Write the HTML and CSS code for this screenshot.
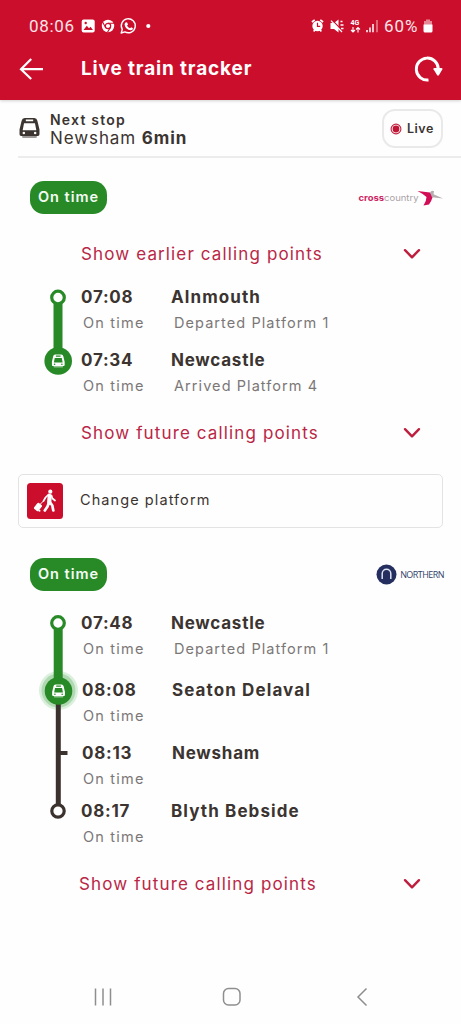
FILE: index.html
```html
<!DOCTYPE html>
<html lang="en">
<head>
<meta charset="utf-8">
<title>Live train tracker</title>
<link rel="stylesheet" href="styles.css">
</head>
<body>
<svg class="defs" width="0" height="0">
  <symbol id="train" viewBox="0 0 20 20">
    <path fill-rule="evenodd" d="M5.500 0.500H14.500Q17 0.500 17.500 3L19.500 11.500V16Q19.500 17.500 18 17.500H2Q0.500 17.500 0.500 16V11.500L2.500 3Q3 0.500 5.500 0.500ZM6.500 2V3.600H13.500V2ZM4.800 5.400L3.500 12.200H16.500L15.200 5.400ZM4.600 13.600A1.200 1.200 0 1 0 4.600 16A1.200 1.200 0 1 0 4.600 13.600ZM15.400 13.600A1.200 1.200 0 1 0 15.400 16A1.200 1.200 0 1 0 15.400 13.600Z"/>
    <path d="M3 17.500H17V18.500Q17 19.500 16 19.500H4Q3 19.500 3 18.500Z" opacity=".5"/>
  </symbol>
  <symbol id="chevron" viewBox="0 0 18 12">
    <path d="M2 2.200L9 9.300L16 2.200" fill="none" stroke="#bf1d3d" stroke-width="2.400" stroke-linecap="round" stroke-linejoin="round"/>
  </symbol>
</svg>

<header class="top">
  <div class="status">
    <span class="clock">08:06</span>
    <svg class="st-apps" width="72" height="18" viewBox="0 0 72 18" fill="none">
      <rect x="0.700" y="2.500" width="13" height="13" rx="2" fill="#fff"/>
      <path d="M2.500 13L5.800 8.800L8 11.200L9.500 9.700L12 13Z" fill="#cc0e2d"/>
      <circle cx="4.700" cy="6" r="1.200" fill="#cc0e2d"/>
      <circle cx="27" cy="9" r="6.200" fill="#fff"/>
      <circle cx="27" cy="9" r="2.700" fill="#fff" stroke="#cc0e2d" stroke-width="1.200"/>
      <path d="M27 6.200H33M24.600 10.400L21.700 5.300M29.400 10.400L26.500 15.300" stroke="#cc0e2d" stroke-width="1.100"/>
      <path d="M40.200 16L41.300 12.400A7 7 0 1 1 43.900 14.900Z" stroke="#fff" stroke-width="1.400" stroke-linejoin="round"/>
      <path d="M44.500 5.500L46 5.200L47 7.500L46 8.700Q47 10.600 49 11.300L50.200 10.200L52 11.200Q52 13 49.800 13.200Q44.500 12.500 43.600 7.700Q43.600 6.200 44.500 5.500Z" fill="#fff"/>
      <circle cx="67.300" cy="9" r="2.100" fill="#fff"/>
    </svg>
    <svg class="st-sys" width="68" height="18" viewBox="0 0 68 18" fill="none">
      <circle cx="6.500" cy="9" r="5.200" fill="#fff"/>
      <path d="M0.900 5L3.700 2.800M12.100 5L9.300 2.800M2.700 14.500L4 12.800M10.300 14.500L9 12.800" stroke="#fff" stroke-width="1.700"/>
      <path d="M6.500 5.800V9.400H9.200" stroke="#cc0e2d" stroke-width="1.200"/>
      <path d="M19.500 6H23L27.500 2.500V15.500L23 12H19.500Z" fill="#fff"/>
      <path d="M21 3L32.500 15" stroke="#cc0e2d" stroke-width="1.200"/>
      <path d="M20 3.700L31 15" stroke="#fff" stroke-width="1.200"/>
      <path d="M29.500 4.500H31.500M29.500 8H32.500M30 11.500H32.500" stroke="#fff" stroke-width="1.300"/>
      <text x="39.500" y="8.200" class="net">4G</text>
      <path d="M42 10V15M40 13L42 15L44 13M47 15.500V10.500M45 12.500L47 10.500L49 12.500" stroke="#fff" stroke-width="1.100"/>
      <path d="M56 13V15.300M59 10.500V15.300M62 7V15.300" stroke="#fff" stroke-width="1.500"/>
      <path d="M66 3V15.300" stroke="#e78796" stroke-width="1.500"/>
    </svg>
    <span class="pct">60%</span>
    <svg class="batt" width="10" height="14" viewBox="0 0 10 14"><path d="M3 0.500H7V2H9V6H1V2H3Z" fill="#e78796"/><path d="M0.500 5.500H9.500V12Q9.500 13.500 8 13.500H2Q0.500 13.500 0.500 12Z" fill="#fff"/></svg>
  </div>
  <div class="bar">
    <svg class="back" width="26" height="24" viewBox="0 0 26 24" fill="none" stroke="#fff" stroke-width="2.200"><path d="M13.200 2L3 12.200L13.200 22M3 12.200H25"/></svg>
    <h1>Live train tracker</h1>
    <svg class="refresh" width="30" height="28" viewBox="0 0 30 28"><path d="M14.500 25A11 11 0 1 1 24.300 14" fill="none" stroke="#fff" stroke-width="2.900"/><path d="M19.500 14.200Q19 13 20.500 13H27.500Q29 13 28.300 14.500L25 20Q24 21.500 23 20Z" fill="#fff"/></svg>
  </div>
</header>

<section class="next">
  <svg class="next-icon" width="21" height="22"><use href="#train"/></svg>
  <div class="next-text">
    <div class="next-label">Next stop</div>
    <div class="next-place"><span>Newsham</span> <b>6min</b></div>
  </div>
  <div class="live">
    <svg width="12" height="12" viewBox="0 0 12 12"><circle cx="6" cy="6" r="4.900" fill="none" stroke="#c3213f" stroke-width="1.100"/><circle cx="6" cy="6" r="3.400" fill="#c01535"/></svg>
    <span>Live</span>
  </div>
</section>

<main>
  <div class="leg-head">
    <span class="badge">On time</span>
    <svg class="cross" width="86" height="18" viewBox="0 0 86 18">
      <text x="0.500" y="12.200" class="cc" textLength="60" lengthAdjust="spacingAndGlyphs"><tspan class="cc-b">cross</tspan>country</text>
      <path d="M59.500 2L72 3.600L75 7Q73.500 12 71 15.500L65.500 16.500Q68.500 12 68.500 8Q65 4.800 59.500 2Z" fill="#d10d55"/>
      <path d="M72 3.500Q73.500 1 76 2.200L75.500 5.300L85 9.500L74 8.200Z" fill="#b5adb0"/>
    </svg>
  </div>
  <div class="more"><span>Show earlier calling points</span><svg width="18" height="12"><use href="#chevron"/></svg></div>

  <div class="journey journey-a">
    <svg class="rail" width="42" height="104" viewBox="0 0 42 104">
      <path d="M21 13V78" stroke="#278a27" stroke-width="9"/>
      <circle cx="21" cy="13.500" r="6.300" fill="#fff" stroke="#278a27" stroke-width="3.200"/>
      <circle cx="21.200" cy="77" r="13.800" fill="#278a27"/>
      <use href="#train" x="14.500" y="70" width="13.500" height="14" fill="#fff"/>
    </svg>
    <div class="stops">
      <div class="stop"><b class="time">07:08</b><b class="place wide">Alnmouth</b><span class="state">On time</span><span class="plat">Departed Platform 1</span></div>
      <div class="stop"><b class="time">07:34</b><b class="place">Newcastle</b><span class="state">On time</span><span class="plat">Arrived Platform 4</span></div>
    </div>
  </div>
  <div class="more more-f"><span>Show future calling points</span><svg width="18" height="12"><use href="#chevron"/></svg></div>

  <div class="change">
    <svg width="36" height="36" viewBox="0 0 36 36">
      <rect width="36" height="36" rx="3.500" fill="#cc0e2d"/>
      <g fill="none" stroke="#fff" stroke-linecap="round" stroke-linejoin="round">
        <path d="M22.700 12.800L22.200 19.500" stroke-width="4.200"/>
        <path d="M22 19.500L20.500 23.500L17.800 27.500M22.800 19L25.300 22.500L26.300 27.500" stroke-width="2.700"/>
        <path d="M21.500 11.500L18.500 14.500L16.500 18M24.500 12.500L25.500 15.500L28 17.500" stroke-width="1.700"/>
        <path d="M16.500 18L13 21.500" stroke-width="1"/>
      </g>
      <circle cx="23.300" cy="8.700" r="2.100" fill="#fff"/>
      <rect x="8.200" y="20.300" width="5.600" height="7.500" rx="1.200" fill="#fff" transform="rotate(38 11 24)"/>
      <circle cx="12.500" cy="27.700" r="1" fill="#fff"/>
    </svg>
    <span>Change platform</span>
  </div>

  <div class="leg-head leg-head-b">
    <span class="badge">On time</span>
    <div class="northern">
      <svg width="21" height="21" viewBox="0 0 21 21"><circle cx="10.500" cy="10.500" r="10" fill="#252f5f"/><path d="M6.200 15V9.500A4.300 4.300 0 0 1 14.800 9.500V15" fill="none" stroke="#dce3f2" stroke-width="1.500"/></svg>
      <span>NORTHERN</span>
    </div>
  </div>

  <div class="journey">
    <svg class="rail" width="42" height="241" viewBox="0 0 42 241">
      <circle cx="21.500" cy="81.500" r="19.500" fill="#daf0dc"/>
      <circle cx="21.500" cy="81.500" r="17" fill="#b0d9b2"/>
      <path d="M21.300 83V202" stroke="#3b322e" stroke-width="5"/>
      <path d="M21.300 144H30.500" stroke="#3b322e" stroke-width="4"/>
      <circle cx="21" cy="202" r="6.200" fill="#fff" stroke="#3b322e" stroke-width="3.200"/>
      <path d="M21.200 14V80" stroke="#278a27" stroke-width="9"/>
      <circle cx="21" cy="14" r="6.300" fill="#fff" stroke="#278a27" stroke-width="3.200"/>
      <circle cx="21.500" cy="82" r="13.800" fill="#278a27"/>
      <use href="#train" x="14.800" y="75" width="13.500" height="14" fill="#fff"/>
    </svg>
    <div class="stops stops-b">
      <div class="stop"><b class="time">07:48</b><b class="place">Newcastle</b><span class="state">On time</span><span class="plat">Departed Platform 1</span></div>
      <div class="stop mid"><b class="time">08:08</b><b class="place wide">Seaton Delaval</b><span class="state">On time</span></div>
      <div class="stop mid"><b class="time">08:13</b><b class="place">Newsham</b><span class="state">On time</span></div>
      <div class="stop"><b class="time">08:17</b><b class="place wide">Blyth Bebside</b><span class="state">On time</span></div>
    </div>
  </div>
  <div class="more more-last"><span>Show future calling points</span><svg width="18" height="12"><use href="#chevron"/></svg></div>
</main>

<nav class="sysnav">
  <svg width="18" height="20" viewBox="0 0 18 20"><path d="M1.500 1.500V18.500M9 1.500V18.500M16.500 1.500V18.500" stroke="#8e8e8e" stroke-width="1.500"/></svg>
  <svg width="20" height="20" viewBox="0 0 20 20"><rect x="1.500" y="1.500" width="16.500" height="16.500" rx="5" fill="none" stroke="#8e8e8e" stroke-width="1.500"/></svg>
  <svg width="12" height="20" viewBox="0 0 12 20"><path d="M10.500 1.500L2 10L10.500 18.500" fill="none" stroke="#8e8e8e" stroke-width="1.500"/></svg>
</nav>
</body>
</html>
```
FILE: styles.css
```css
* { box-sizing: border-box; }
body { margin: 0; width: 461px; height: 1024px; overflow: hidden; background: #fefefe; color: #3b3431; font-family: Inter, "Liberation Sans", sans-serif; white-space: nowrap; display: flex; flex-direction: column; }
svg { display: block; flex: none; }
b { font-weight: 700; }
.defs { position: absolute; }

.top { height: 100px; background: #cc0e2d; color: #fff; box-shadow: 0 1px 3px rgba(0,0,0,.18); }
.status { height: 51px; display: flex; align-items: center; padding: 0 28px 0 29px; }
.clock, .pct { font: 400 17px/20px Roboto, sans-serif; color: #fbe4e8; }
.clock { width: 52px; letter-spacing: .7px; }
.st-sys { margin-left: 158px; }
.net { font: 700 7px Roboto, sans-serif; fill: #fff; }
.pct { margin-left: 5px; width: 38px; letter-spacing: .9px; }
.batt { margin-left: 1px; }
.bar { display: flex; align-items: center; height: 35px; padding: 0 17px 0 18px; }
h1 { margin: 0 auto 0 37px; font-size: 19px; font-weight: 700; line-height: 26px; letter-spacing: .85px; }

.next { flex: none; height: 58px; margin-left: 18px; padding-right: 18px; border-bottom: 2px solid #ececec; display: flex; align-items: center; }
.next-icon { fill: #3b3431; margin-left: 1px; }
.next-text { margin: 0 auto 0 10px; padding-top: 1px; }
.next-label { font-size: 14px; font-weight: 600; line-height: 19px; letter-spacing: 1.200px; }
.next-place { font-size: 17px; line-height: 19px; letter-spacing: .9px; }
.live { width: 61px; height: 39px; margin-top: 1px; border: 2px solid #e9e9ea; border-radius: 13px; display: flex; align-items: center; gap: 5px; padding-left: 6px; font-size: 12.500px; font-weight: 600; letter-spacing: .5px; }

main { flex: 1; }
.leg-head { display: flex; align-items: center; justify-content: space-between; padding: 0 17px 0 30px; margin-top: 23px; height: 33px; }
.badge { width: 77px; height: 33px; border-radius: 14px; background: #278a27; color: #f4fbf4; text-align: center; font-size: 14.500px; font-weight: 600; line-height: 32px; letter-spacing: 1px; }
.cc { font: 400 9px Inter, sans-serif; fill: #aaa3a7; }
.cc-b { font-weight: 700; fill: #cf2463; }
.more { display: flex; align-items: center; justify-content: space-between; height: 28px; padding: 0 40px 0 81px; margin-top: 26px; color: #b92746; font-size: 17px; letter-spacing: 1.130px; }
.journey { display: flex; margin: 16px 0 0 37px; }
.stops { display: flex; flex-direction: column; gap: 11px; margin-left: 2px; }
.stop { display: grid; grid-template: 26px 26px / 90px 230px; line-height: 26px; }
.time, .place { font-size: 17px; letter-spacing: .75px; }
.place.wide { letter-spacing: 1.100px; }
.state, .plat { font-size: 14.500px; color: #7b7777; letter-spacing: 1.070px; padding-left: 2px; }
.state { letter-spacing: 1.200px; }
.plat { padding-left: 3px; }
.stop.mid .time, .stop.mid .place { padding-left: 1px; }
.more-f { margin-top: 20px; }
.change { display: flex; align-items: center; width: 425px; height: 54px; margin: 27px 0 0 18px; padding-left: 8px; border: 1px solid #e3e3e3; border-radius: 5px; font-size: 14.500px; letter-spacing: 1.080px; }
.change span { margin-left: 17px; line-height: 26px; padding-bottom: 2px; }
.leg-head-b { margin-top: 30px; }
.northern { display: flex; align-items: center; gap: 3px; color: #343e69; }
.northern span { font: 500 9px/20px "Open Sans", sans-serif; letter-spacing: -.55px; }
.leg-head-b + .journey { margin-top: 18px; }
.stops-b { gap: 0; padding-top: 1px; height: 241px; }
.stops-b .stop:nth-child(2) { margin-top: 15px; }
.stops-b .stop:nth-child(3) { margin-top: 11px; }
.stops-b .stop:nth-child(4) { margin-top: 6px; }
.more-last { margin-top: 20px; padding-left: 79px; }

.sysnav { height: 54px; display: grid; grid-template-columns: 128px 134px 12px; align-items: center; padding-left: 94px; }
```
